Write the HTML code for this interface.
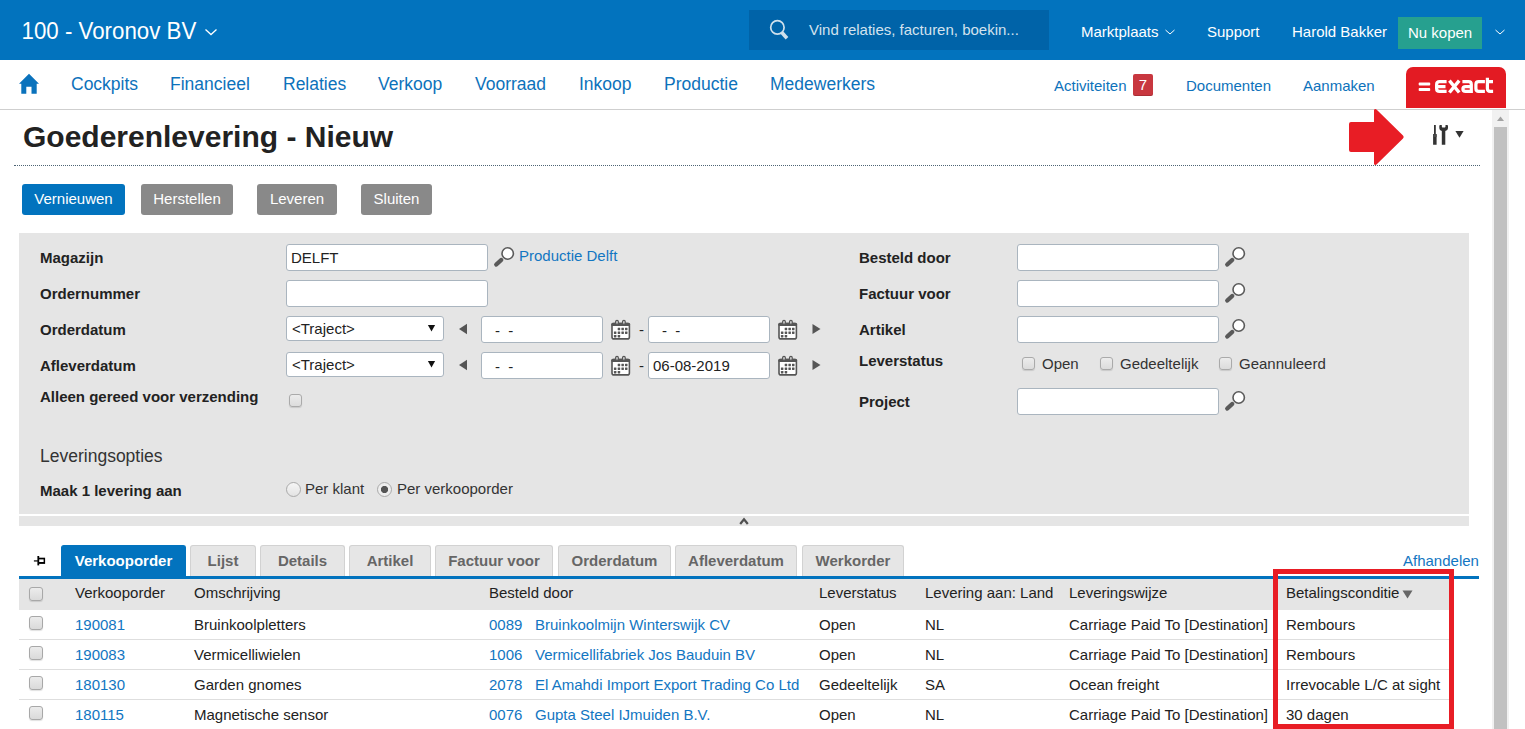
<!DOCTYPE html>
<html><head><meta charset="utf-8">
<style>
*{box-sizing:border-box;}
html,body{margin:0;padding:0;}
body{width:1525px;height:729px;overflow:hidden;position:relative;background:#fff;font-family:"Liberation Sans",sans-serif;color:#222;}
.a{position:absolute;white-space:pre;}
.t15{font-size:15px;line-height:15px;}
.t17{font-size:17.5px;line-height:17px;}
.b{font-weight:bold;}
.lnk{color:#1276c2;}
.hdr{position:absolute;left:0;top:0;width:1525px;height:60px;background:#0273be;}
.wh{color:#fff;}
.nav{position:absolute;left:0;top:60px;width:1525px;height:50px;background:#fff;border-bottom:1px solid #cfcfcf;}
.navi{color:#0d72bb;}
.btn{position:absolute;top:184px;height:31px;border-radius:3px;color:#fff;font-size:15px;line-height:29px;text-align:center;}
.panel{position:absolute;left:19px;top:233px;width:1450px;height:281px;background:#e5e5e5;}
.inp{position:absolute;background:#fff;border:1px solid #aab5bf;border-radius:3px;}
.tab{position:absolute;top:545px;height:31px;background:#e6e6e6;border:1px solid #d2d2d2;border-bottom:none;border-radius:3px 3px 0 0;color:#666;font-weight:bold;font-size:15px;line-height:29px;text-align:center;}
.cb{position:absolute;width:13px;height:13px;border:1px solid #aaa;border-radius:3px;background:linear-gradient(#ececec,#dcdcdc);box-shadow:0 1px 1px rgba(0,0,0,.12);}
.row{position:absolute;left:19px;width:1433px;height:30px;border-bottom:1px solid #dedede;}
.cb2{position:absolute;width:14px;height:14px;border:1px solid #a8a8a8;border-radius:3px;background:linear-gradient(#ececec,#dadada);box-shadow:0 1px 1px rgba(0,0,0,.12);}
</style></head><body>

<svg width="0" height="0" style="position:absolute"><defs>
<g id="cal"><rect x="1" y="4.5" width="17.4" height="15.4" rx="2" fill="#fff" stroke="#555" stroke-width="1.6"/><rect x="0.2" y="3.7" width="19" height="3.2" rx="1.5" fill="#555"/><rect x="4.7" y="1.4" width="2.6" height="4" rx="1.3" fill="#eee" stroke="#555" stroke-width="1.3"/><rect x="11.6" y="1.4" width="2.6" height="4" rx="1.3" fill="#eee" stroke="#555" stroke-width="1.3"/><g fill="#555"><rect x="6.7" y="8.7" width="2.5" height="2.5" rx=".4"/><rect x="10.4" y="8.7" width="2.5" height="2.5" rx=".4"/><rect x="14" y="8.7" width="2.5" height="2.5" rx=".4"/><rect x="2.9" y="12.4" width="2.5" height="2.5" rx=".4"/><rect x="6.7" y="12.4" width="2.5" height="2.5" rx=".4"/><rect x="10.4" y="12.4" width="2.5" height="2.5" rx=".4"/><rect x="14" y="12.4" width="2.5" height="2.5" rx=".4"/><rect x="2.9" y="16" width="2.5" height="2.5" rx=".4"/><rect x="6.7" y="16" width="2.5" height="2.5" rx=".4"/></g></g>
<g id="mag"><circle cx="18.7" cy="11.5" r="5.7" fill="#fff" stroke="#5a5a5a" stroke-width="1.6"/><path d="M7.3 22.5 L12.2 18" stroke="#5a5a5a" stroke-width="4.4" stroke-linecap="round"/></g>
</defs></svg>
<!-- HEADER -->
<div class="hdr"></div>
<div class="a wh" style="left:21.5px;top:20px;font-size:22.3px;line-height:23px;transform:scaleY(1.1);transform-origin:0 19px;">100 - Voronov BV</div>
<svg class="a" style="left:204px;top:27px" width="14" height="10" viewBox="0 0 14 10"><path d="M1.5 2.5 L7 7.5 L12.5 2.5" stroke="#fff" stroke-width="1.3" fill="none"/></svg>

<div class="a" style="left:749px;top:10px;width:300px;height:40px;background:#0063a8;"></div>
<svg class="a" style="left:768px;top:19px" width="24" height="24" viewBox="0 0 24 24"><circle cx="9.4" cy="8.4" r="6.7" stroke="#cfe0ec" stroke-width="1.7" fill="none"/><path d="M13.6 13.2 L19 19.2" stroke="#cfe0ec" stroke-width="3.6"/></svg>
<div class="a t15" style="left:809px;top:22px;color:#d3e2ee;">Vind relaties, facturen, boekin...</div>

<div class="a t15 wh" style="left:1081px;top:24px;">Marktplaats</div>
<svg class="a" style="left:1164px;top:28px" width="12" height="8" viewBox="0 0 12 8"><path d="M1.5 2 L6 6 L10.5 2" stroke="#fff" stroke-width="1" fill="none"/></svg>
<div class="a t15 wh" style="left:1207px;top:24px;">Support</div>
<div class="a t15 wh" style="left:1292px;top:24px;">Harold Bakker</div>
<div class="a" style="left:1398px;top:17px;width:84px;height:32px;background:#26a08f;"></div>
<div class="a t15 wh" style="left:1408px;top:25px;">Nu kopen</div>
<svg class="a" style="left:1494px;top:28px" width="12" height="8" viewBox="0 0 12 8"><path d="M1.5 2 L6 6 L10.5 2" stroke="#fff" stroke-width="1" fill="none"/></svg>

<!-- NAV -->
<div class="nav"></div>
<svg class="a" style="left:19px;top:74px;overflow:visible" width="20" height="20" viewBox="0 0 20 20"><path d="M10 -0.2 L20 9.8 L17.7 9.8 L17.7 19.8 L12.5 19.8 L12.5 12.7 L7.3 12.7 L7.3 19.8 L2.3 19.8 L2.3 9.8 L0 9.8 Z" fill="#0a72bc"/></svg>
<div class="a t17 navi" style="left:71px;top:76px;">Cockpits</div>
<div class="a t17 navi" style="left:170px;top:76px;">Financieel</div>
<div class="a t17 navi" style="left:283px;top:76px;">Relaties</div>
<div class="a t17 navi" style="left:378px;top:76px;">Verkoop</div>
<div class="a t17 navi" style="left:475px;top:76px;">Voorraad</div>
<div class="a t17 navi" style="left:579px;top:76px;">Inkoop</div>
<div class="a t17 navi" style="left:664px;top:76px;">Productie</div>
<div class="a t17 navi" style="left:770px;top:76px;">Medewerkers</div>

<div class="a t15 navi" style="left:1054px;top:78px;">Activiteiten</div>
<div class="a" style="left:1133px;top:74px;width:20px;height:22px;background:#c8373f;border-radius:2px;color:#fff;font-size:15px;line-height:22px;text-align:center;box-shadow:inset 0 -1px 0 rgba(0,0,0,.15);">7</div>
<div class="a t15 navi" style="left:1186px;top:78px;">Documenten</div>
<div class="a t15 navi" style="left:1303px;top:78px;">Aanmaken</div>
<div class="a" style="left:1406px;top:67px;width:100px;height:41px;background:#e31b23;border-radius:7px 7px 0 0;"></div>
<svg class="a" style="left:1406px;top:67px" width="100" height="41" viewBox="1406 67 100 41"><g fill="#fff"><rect x="1418.7" y="82.6" width="11.5" height="2.9" rx="0.8"/><rect x="1418.7" y="88.1" width="11.5" height="2.9" rx="0.8"/></g><g stroke="#fff" stroke-width="3.2" fill="none" stroke-linejoin="round"><path d="M1446.6 81.7 H1439.6 Q1436.6 81.7 1436.6 84.7 V88.4 Q1436.6 91.4 1439.6 91.4 H1446.6 M1436.6 86.6 H1445.5"/><path d="M1449.4 80.6 L1459.2 92.5 M1459.2 80.6 L1449.4 92.5" stroke-width="3.4"/><path d="M1462.4 81.7 H1468.6 Q1471.3 81.7 1471.3 84.4 V93 M1471.3 86.6 H1465.6 Q1462.9 86.6 1462.9 89 Q1462.9 91.4 1465.6 91.4 H1471.3"/><path d="M1484.9 81.7 H1478.7 Q1475.9 81.7 1475.9 84.5 V88.6 Q1475.9 91.4 1478.7 91.4 H1484.9"/><path d="M1487.4 77.7 V88.6 Q1487.4 91.4 1490.2 91.4 H1493.1 M1485.8 81.7 H1493"/></g></svg>

<!-- SCROLLBAR -->
<div class="a" style="left:1492px;top:110px;width:17px;height:619px;background:#f1f1f1;"></div>
<svg class="a" style="left:1496px;top:115px" width="9" height="7" viewBox="0 0 9 7"><path d="M4.5 1.5 L8 6 L1 6 Z" fill="#a3a3a3"/></svg>
<div class="a" style="left:1494px;top:127px;width:13px;height:602px;background:#c1c1c1;"></div>

<!-- TITLE -->
<div class="a b" style="left:23px;top:122px;font-size:30px;line-height:30px;color:#222;">Goederenlevering - Nieuw</div>
<div class="a" style="left:14px;top:165px;width:1466px;height:1px;border-top:1px dotted #4d6474;"></div>

<!-- red arrow -->
<svg class="a" style="left:1347px;top:107px" width="60" height="60" viewBox="0 0 60 60"><path d="M4 15 L27 15 L27 3 Q28 1 30 3 L56 28.5 Q57.5 30 56 31.5 L30 57 Q28 59 27 57 L27 45 L4 45 Q2 45 2 43 L2 17 Q2 15 4 15 Z" fill="#e81d25"/></svg>
<!-- tools icon -->
<svg class="a" style="left:1432px;top:124px" width="34" height="22" viewBox="0 0 34 22"><path d="M2 1.1 H3.8 V10 H4.6 V20.7 H1.1 V10 H2 Z" fill="#333"/><rect x="1.1" y="10.3" width="3.5" height="2.8" fill="#4a4a4a"/><path d="M7.3 2 Q7.3 1.1 8.2 1.1 L9.8 1.1 L9.8 2.4 Q9.8 3.6 11.65 3.6 Q13.5 3.6 13.5 2.4 L13.5 1.1 L15.1 1.1 Q16 1.1 16 2 L16 4.2 Q16 6.2 13.3 6.9 L13.3 20.7 L9.8 20.7 L9.8 6.9 Q7.3 6.2 7.3 4.2 Z" fill="#333"/><path d="M23.4 7.1 H31.6 L27.5 13.7 Z" fill="#333"/></svg>

<!-- BUTTONS -->
<div class="btn" style="left:22px;width:103px;background:#0273be;">Vernieuwen</div>
<div class="btn" style="left:141px;width:92px;background:#898989;">Herstellen</div>
<div class="btn" style="left:257px;width:80px;background:#898989;">Leveren</div>
<div class="btn" style="left:361px;width:71px;background:#898989;">Sluiten</div>

<!-- PANEL -->
<div class="panel"></div>
<div class="a" style="left:19px;top:516px;width:1450px;height:10px;background:#e5e5e5;"></div>
<svg class="a" style="left:739px;top:517px" width="10" height="8" viewBox="0 0 10 8"><path d="M1.2 7 L5 2.2 L8.8 7" stroke="#505050" stroke-width="2.2" fill="none"/></svg>

<!-- labels left -->
<div class="a t15 b" style="left:40px;top:250px;">Magazijn</div>
<div class="a t15 b" style="left:40px;top:286px;">Ordernummer</div>
<div class="a t15 b" style="left:40px;top:322px;">Orderdatum</div>
<div class="a t15 b" style="left:40px;top:358px;">Afleverdatum</div>
<div class="a t15 b" style="left:40px;top:389px;">Alleen gereed voor verzending</div>

<div class="inp" style="left:286px;top:244px;width:202px;height:27px;"></div>
<div class="a t15" style="left:291px;top:250px;">DELFT</div>
<svg class="a" style="left:489px;top:242px" width="30" height="30"><use href="#mag"/></svg>
<div class="a t15 lnk" style="left:519px;top:248px;">Productie Delft</div>
<div class="inp" style="left:286px;top:280px;width:202px;height:27px;"></div>

<div class="inp" style="left:286px;top:316px;width:158px;height:25px;"></div>
<div class="a t15" style="left:292px;top:321px;">&lt;Traject&gt;</div>
<svg class="a" style="left:427px;top:324px" width="9" height="8" viewBox="0 0 9 8"><path d="M0.9 1 H8.1 L4.5 7.6 Z" fill="#111"/></svg>
<svg class="a" style="left:458px;top:323px" width="10" height="12" viewBox="0 0 10 12"><path d="M9 0.8 L9 11.3 L1 6.05 Z" fill="#555"/></svg>
<div class="inp" style="left:481px;top:316px;width:122px;height:27px;"></div>
<div class="a t15" style="left:495px;top:323px;">-  -</div>
<div class="a t15" style="left:639px;top:322px;">-</div>
<div class="inp" style="left:648px;top:316px;width:122px;height:27px;"></div>
<div class="a t15" style="left:662px;top:323px;">-  -</div>
<svg class="a" style="left:812px;top:323px" width="10" height="12" viewBox="0 0 10 12"><path d="M0.5 1 L8.5 6 L0.5 11 Z" fill="#555"/></svg>

<div class="inp" style="left:286px;top:352px;width:158px;height:25px;"></div>
<div class="a t15" style="left:292px;top:357px;">&lt;Traject&gt;</div>
<svg class="a" style="left:427px;top:360px" width="9" height="8" viewBox="0 0 9 8"><path d="M0.9 1 H8.1 L4.5 7.6 Z" fill="#111"/></svg>
<svg class="a" style="left:458px;top:359px" width="10" height="12" viewBox="0 0 10 12"><path d="M9 0.8 L9 11.3 L1 6.05 Z" fill="#555"/></svg>
<div class="inp" style="left:481px;top:352px;width:122px;height:27px;"></div>
<div class="a t15" style="left:495px;top:359px;">-  -</div>
<div class="a t15" style="left:639px;top:358px;">-</div>
<div class="inp" style="left:648px;top:352px;width:122px;height:27px;"></div>
<div class="a t15" style="left:653px;top:358px;">06-08-2019</div>
<svg class="a" style="left:812px;top:359px" width="10" height="12" viewBox="0 0 10 12"><path d="M0.5 1 L8.5 6 L0.5 11 Z" fill="#555"/></svg>

<svg class="a" style="left:611px;top:319px" width="20" height="21"><use href="#cal"/></svg>
<svg class="a" style="left:611px;top:355px" width="20" height="21"><use href="#cal"/></svg>
<svg class="a" style="left:778px;top:319px" width="20" height="21"><use href="#cal"/></svg>
<svg class="a" style="left:778px;top:355px" width="20" height="21"><use href="#cal"/></svg>
<div class="cb" style="left:289px;top:394px;"></div>

<!-- labels right -->
<div class="a t15 b" style="left:859px;top:250px;">Besteld door</div>
<div class="a t15 b" style="left:859px;top:286px;">Factuur voor</div>
<div class="a t15 b" style="left:859px;top:322px;">Artikel</div>
<div class="a t15 b" style="left:859px;top:353px;">Leverstatus</div>
<div class="a t15 b" style="left:859px;top:394px;">Project</div>

<div class="inp" style="left:1017px;top:244px;width:202px;height:27px;"></div>
<div class="inp" style="left:1017px;top:280px;width:202px;height:27px;"></div>
<div class="inp" style="left:1017px;top:316px;width:202px;height:27px;"></div>
<div class="inp" style="left:1017px;top:388px;width:202px;height:27px;"></div>

<svg class="a" style="left:1220px;top:242px" width="30" height="30"><use href="#mag"/></svg>
<svg class="a" style="left:1220px;top:278px" width="30" height="30"><use href="#mag"/></svg>
<svg class="a" style="left:1220px;top:314px" width="30" height="30"><use href="#mag"/></svg>
<svg class="a" style="left:1220px;top:386px" width="30" height="30"><use href="#mag"/></svg>
<div class="cb" style="left:1022px;top:357px;"></div>
<div class="a t15" style="left:1042px;top:356px;color:#333;">Open</div>
<div class="cb" style="left:1100px;top:357px;"></div>
<div class="a t15" style="left:1120px;top:356px;color:#333;">Gedeeltelijk</div>
<div class="cb" style="left:1219px;top:357px;"></div>
<div class="a t15" style="left:1239px;top:356px;color:#333;">Geannuleerd</div>

<div class="a" style="left:40px;top:447px;font-size:17.5px;line-height:18px;color:#333;">Leveringsopties</div>
<div class="a t15 b" style="left:40px;top:483px;">Maak 1 levering aan</div>
<div class="a" style="left:286px;top:482px;width:15px;height:15px;border-radius:50%;border:1px solid #aaa;background:linear-gradient(#f6f6f6,#e3e3e3);"></div>
<div class="a t15" style="left:305px;top:481px;color:#333;">Per klant</div>
<div class="a" style="left:377px;top:482px;width:15px;height:15px;border-radius:50%;border:1px solid #aaa;background:radial-gradient(circle,#555 0 3.2px,#eee 4px);"></div>
<div class="a t15" style="left:397px;top:481px;color:#333;">Per verkooporder</div>

<!-- TABS -->
<svg class="a" style="left:28px;top:550px" width="24" height="22" viewBox="0 0 24 22"><rect x="5.9" y="10" width="4" height="1.8" fill="#555"/><rect x="9.4" y="6" width="1.8" height="9.4" fill="#000"/><rect x="10.3" y="7.7" width="6.8" height="6.2" fill="#000"/><rect x="11.2" y="9.4" width="4.4" height="2.6" fill="#fff"/></svg>
<div class="tab" style="left:61px;width:125px;background:#0273be;border-color:#0273be;color:#fff;">Verkooporder</div>
<div class="tab" style="left:190px;width:66px;">Lijst</div>
<div class="tab" style="left:260px;width:85px;">Details</div>
<div class="tab" style="left:349px;width:82px;">Artikel</div>
<div class="tab" style="left:435px;width:118px;">Factuur voor</div>
<div class="tab" style="left:558px;width:113px;">Orderdatum</div>
<div class="tab" style="left:675px;width:122px;">Afleverdatum</div>
<div class="tab" style="left:802px;width:102px;">Werkorder</div>
<div class="a t15 lnk" style="left:1403px;top:553px;">Afhandelen</div>
<div class="a" style="left:19px;top:576px;width:1460px;height:3px;background:#0273be;"></div>

<!-- TABLE -->
<div class="a" style="left:19px;top:579px;width:1433px;height:31px;background:#e5e5e5;"></div>
<div class="cb2" style="left:29px;top:587px;"></div>
<div class="a t15" style="left:75px;top:585px;">Verkooporder</div>
<div class="a t15" style="left:194px;top:585px;">Omschrijving</div>
<div class="a t15" style="left:489px;top:585px;">Besteld door</div>
<div class="a t15" style="left:819px;top:585px;">Leverstatus</div>
<div class="a t15" style="left:925px;top:585px;">Levering aan: Land</div>
<div class="a t15" style="left:1069px;top:585px;">Leveringswijze</div>
<div class="a t15" style="left:1286px;top:585px;">Betalingsconditie</div>
<svg class="a" style="left:1402px;top:590px" width="11" height="9" viewBox="0 0 11 9"><path d="M0.5 0.5 L10.5 0.5 L5.5 8.5 Z" fill="#666"/></svg>

<div class="row" style="top:610px;"></div>
<div class="row" style="top:640px;"></div>
<div class="row" style="top:670px;"></div>
<div class="row" style="top:700px;border-bottom:none;"></div>

<div class="cb2" style="left:29px;top:616px;"></div>
<div class="a t15 lnk" style="left:75px;top:617px;">190081</div>
<div class="a t15" style="left:194px;top:617px;">Bruinkoolpletters</div>
<div class="a t15 lnk" style="left:489px;top:617px;">0089</div>
<div class="a t15 lnk" style="left:535px;top:617px;">Bruinkoolmijn Winterswijk CV</div>
<div class="a t15" style="left:819px;top:617px;">Open</div>
<div class="a t15" style="left:925px;top:617px;">NL</div>
<div class="a t15" style="left:1069px;top:617px;">Carriage Paid To [Destination]</div>
<div class="a t15" style="left:1286px;top:617px;">Rembours</div>

<div class="cb2" style="left:29px;top:646px;"></div>
<div class="a t15 lnk" style="left:75px;top:647px;">190083</div>
<div class="a t15" style="left:194px;top:647px;">Vermicelliwielen</div>
<div class="a t15 lnk" style="left:489px;top:647px;">1006</div>
<div class="a t15 lnk" style="left:535px;top:647px;">Vermicellifabriek Jos Bauduin BV</div>
<div class="a t15" style="left:819px;top:647px;">Open</div>
<div class="a t15" style="left:925px;top:647px;">NL</div>
<div class="a t15" style="left:1069px;top:647px;">Carriage Paid To [Destination]</div>
<div class="a t15" style="left:1286px;top:647px;">Rembours</div>

<div class="cb2" style="left:29px;top:676px;"></div>
<div class="a t15 lnk" style="left:75px;top:677px;">180130</div>
<div class="a t15" style="left:194px;top:677px;">Garden gnomes</div>
<div class="a t15 lnk" style="left:489px;top:677px;">2078</div>
<div class="a t15 lnk" style="left:535px;top:677px;">El Amahdi Import Export Trading Co Ltd</div>
<div class="a t15" style="left:819px;top:677px;">Gedeeltelijk</div>
<div class="a t15" style="left:925px;top:677px;">SA</div>
<div class="a t15" style="left:1069px;top:677px;">Ocean freight</div>
<div class="a t15" style="left:1286px;top:677px;">Irrevocable L/C at sight</div>

<div class="cb2" style="left:29px;top:706px;"></div>
<div class="a t15 lnk" style="left:75px;top:707px;">180115</div>
<div class="a t15" style="left:194px;top:707px;">Magnetische sensor</div>
<div class="a t15 lnk" style="left:489px;top:707px;">0076</div>
<div class="a t15 lnk" style="left:535px;top:707px;">Gupta Steel IJmuiden B.V.</div>
<div class="a t15" style="left:819px;top:707px;">Open</div>
<div class="a t15" style="left:925px;top:707px;">NL</div>
<div class="a t15" style="left:1069px;top:707px;">Carriage Paid To [Destination]</div>
<div class="a t15" style="left:1286px;top:707px;">30 dagen</div>

<!-- red highlight rect -->
<div class="a" style="left:1273px;top:569px;width:181px;height:160px;border:5px solid #e81d25;"></div>

</body></html>
